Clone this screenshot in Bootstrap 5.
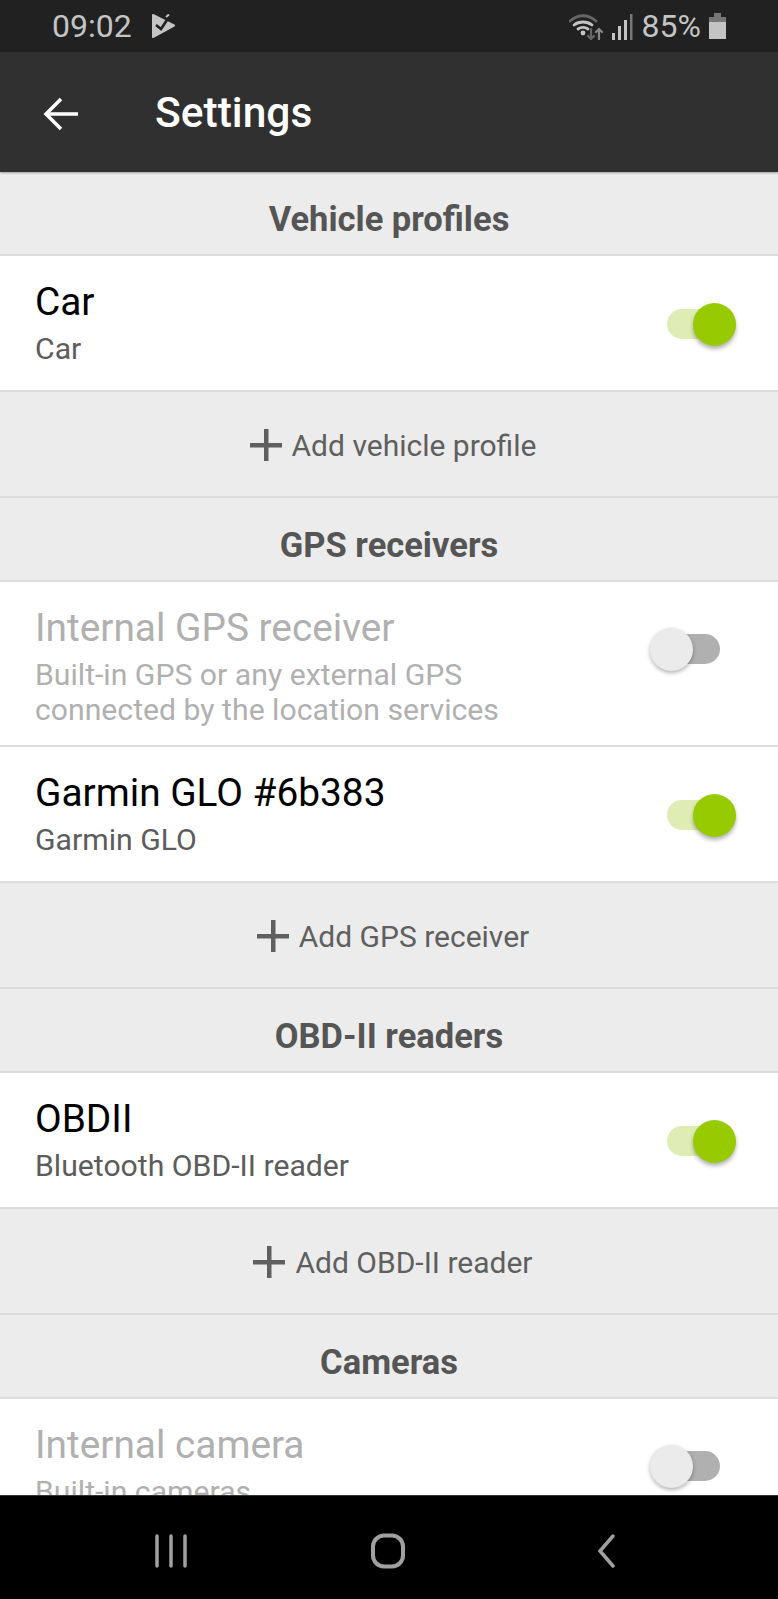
<!DOCTYPE html>
<html lang="en">
<head>
    <meta charset="UTF-8">
    <meta name="viewport" content="width=device-width, initial-scale=1.0">
    <title>Settings</title>
    <link href="https://cdn.jsdelivr.net/npm/bootstrap@5.3.0/dist/css/bootstrap.min.css" rel="stylesheet">
    <style>
        html, body { height: 100%; }
        body { background: #ececec; font-family: Roboto, "Liberation Sans", sans-serif; overflow: hidden; }
        .phone { height: 1599px; }
        .status-bar { height: 52px; flex: none; background: #212121; color: #c4c4c4; font-size: 32px; padding: 0 52px 0 52px; }
        .app-bar { height: 120px; background: #303030; color: #fff; padding: 3px 0 0 43px; box-shadow: 0 1px 2px rgba(0,0,0,.35); z-index: 1; flex: none; }
        .app-title { font-size: 42.500px; font-weight: 500; margin: 0 0 0 76px; line-height: 1; }
        .page-body { min-height: 0; }
        .group-head { height: 84px; padding-top: 14px; color: #555; font-size: 34.500px; font-weight: 700; border-bottom: 2px solid #dcdcdc; }
        .item-row { background: #fff; border-bottom: 2px solid #dcdcdc; padding: 0 42px 2px 35px; height: 136px; }
        .item-row.tall { height: 165px; padding-top: 4px; padding-bottom: 0; }
        .item-row.tall .toggle-track { margin: 0 16px 34px 0; }
        .item-name { font-size: 38.800px; line-height: 46px; color: #000; }
        .item-desc { font-size: 30.200px; line-height: 35px; margin-top: 6px; color: #5c5c5c; }
        .item-row.off .item-name, .item-row.off .item-desc { color: #b0b0b0; }
        .add-row { height: 106px; padding: 2px 0 0 8px; color: #5f5f5f; font-size: 30px; border-bottom: 2px solid #dcdcdc; gap: 10px; }
        .toggle-track { display: block; position: relative; width: 69px; height: 30px; border-radius: 15px; }
        .toggle-track.on { background: #dfedb5; margin-top: 4px; }
        .toggle-track.idle { background: #b0b0b0; }
        .toggle-knob { position: absolute; top: -6px; width: 43px; height: 43px; border-radius: 50%; }
        .on .toggle-knob { right: 0; background: #97cb00; box-shadow: 0 3px 4px rgba(0,0,0,.3); }
        .idle .toggle-knob { left: -1px; background: #ebebeb; box-shadow: 0 2px 4px rgba(0,0,0,.3); }
        .nav-bottom { height: 104px; background: #000; flex: none; border-top: 1px solid #333; padding: 6px 160px 0 155px; }
        .nav-home { margin-right: 7px; }
    </style>
</head>
<body>
    <div class="phone d-flex flex-column">
        <div class="status-bar d-flex align-items-center justify-content-between">
            <div class="d-flex align-items-center gap-3">
                <span>09:02</span>
                <svg class="ms-1" width="23" height="24" viewBox="0 0 23 24"><path d="M1 1l21 10.500L1 23z" fill="#c4c4c4" stroke="#c4c4c4" stroke-width="2" stroke-linejoin="round"/><path d="M4 11l5 4 8-12" fill="none" stroke="#212121" stroke-width="2.600"/><path d="M14 3l3-2.500" fill="none" stroke="#c4c4c4" stroke-width="2"/></svg>
            </div>
            <div class="d-flex align-items-center">
                <svg width="34" height="27" viewBox="0 0 34 27" fill="none" stroke-linecap="round"><path d="M1 8c8-7 18-7 26 0" stroke="#666" stroke-width="2.800"/><path d="M5 12c5-4 13-4 18 0M9 16c3-2 7-2 10 0" stroke="#c4c4c4" stroke-width="2.800"/><circle cx="14" cy="20" r="2.400" fill="#c4c4c4"/><path d="M22 16v10M19 23l3 3 3-3" stroke="#666" stroke-width="2.200"/><path d="M30 16v10M27 19l3-3 3 3" stroke="#888" stroke-width="2.200"/></svg>
                <svg class="ms-2" width="23" height="27" viewBox="0 0 23 27"><path d="M1 20h3v7H1zM7 13h3v14H7zM13 7h3v20h-3z" fill="#c4c4c4"/><path d="M19 1h2.500v26H19z" fill="#777"/></svg>
                <span class="ms-2">85%</span>
                <svg class="ms-2" width="17" height="26" viewBox="0 0 17 26"><path d="M5 0h7v4H5zM0 4h17v5H0z" fill="#777"/><path d="M0 9h17v17H0z" fill="#c4c4c4"/></svg>
            </div>
        </div>

        <div class="app-bar d-flex align-items-center">
            <svg width="36" height="34" viewBox="0 0 36 34" fill="none" stroke="#fff" stroke-width="3.500"><path d="M35 17H3M18 2L3 17l15 15"/></svg>
            <h1 class="app-title">Settings</h1>
        </div>

        <main class="page-body flex-grow-1 overflow-hidden">
            <div class="group-head d-flex align-items-center justify-content-center">Vehicle profiles</div>
            <div class="item-row d-flex align-items-center justify-content-between">
                <div><div class="item-name">Car</div><div class="item-desc">Car</div></div>
                <span class="toggle-track on"><span class="toggle-knob"></span></span>
            </div>
            <div class="add-row d-flex align-items-center justify-content-center">
                <svg width="32" height="32" viewBox="0 0 32 32"><path d="M14 0h4.500v32H14zM0 14h32v4.500H0z" fill="#5f5f5f"/></svg>
                <span>Add vehicle profile</span>
            </div>

            <div class="group-head d-flex align-items-center justify-content-center">GPS receivers</div>
            <div class="item-row tall off d-flex align-items-center justify-content-between">
                <div><div class="item-name">Internal GPS receiver</div><div class="item-desc">Built-in GPS or any external GPS<br>connected by the location services</div></div>
                <span class="toggle-track idle"><span class="toggle-knob"></span></span>
            </div>
            <div class="item-row d-flex align-items-center justify-content-between">
                <div><div class="item-name">Garmin GLO #6b383</div><div class="item-desc">Garmin GLO</div></div>
                <span class="toggle-track on"><span class="toggle-knob"></span></span>
            </div>
            <div class="add-row d-flex align-items-center justify-content-center">
                <svg width="32" height="32" viewBox="0 0 32 32"><path d="M14 0h4.500v32H14zM0 14h32v4.500H0z" fill="#5f5f5f"/></svg>
                <span>Add GPS receiver</span>
            </div>

            <div class="group-head d-flex align-items-center justify-content-center">OBD-II readers</div>
            <div class="item-row d-flex align-items-center justify-content-between">
                <div><div class="item-name">OBDII</div><div class="item-desc">Bluetooth OBD-II reader</div></div>
                <span class="toggle-track on"><span class="toggle-knob"></span></span>
            </div>
            <div class="add-row d-flex align-items-center justify-content-center">
                <svg width="32" height="32" viewBox="0 0 32 32"><path d="M14 0h4.500v32H14zM0 14h32v4.500H0z" fill="#5f5f5f"/></svg>
                <span>Add OBD-II reader</span>
            </div>

            <div class="group-head d-flex align-items-center justify-content-center">Cameras</div>
            <div class="item-row tall off d-flex align-items-center justify-content-between">
                <div><div class="item-name">Internal camera</div><div class="item-desc">Built-in cameras<br>&nbsp;</div></div>
                <span class="toggle-track idle"><span class="toggle-knob"></span></span>
            </div>
        </main>

        <div class="nav-bottom d-flex align-items-center justify-content-between">
            <svg width="32" height="34" viewBox="0 0 32 34" stroke="#a0a0a0" stroke-width="3.500" stroke-linecap="round"><path d="M2 2v30M16 2v30M30 2v30"/></svg>
            <svg class="nav-home" width="36" height="36" viewBox="0 0 36 36" fill="none" stroke="#a0a0a0" stroke-width="4"><rect x="3" y="2.500" width="30" height="31" rx="11"/></svg>
            <svg width="22" height="34" viewBox="0 0 22 34" fill="none" stroke="#a0a0a0" stroke-width="3.500" stroke-linecap="round"><path d="M17 2L4 17l13 15"/></svg>
        </div>
    </div>

    <script src="https://cdn.jsdelivr.net/npm/bootstrap@5.3.0/dist/js/bootstrap.bundle.min.js"></script>
</body>
</html>
